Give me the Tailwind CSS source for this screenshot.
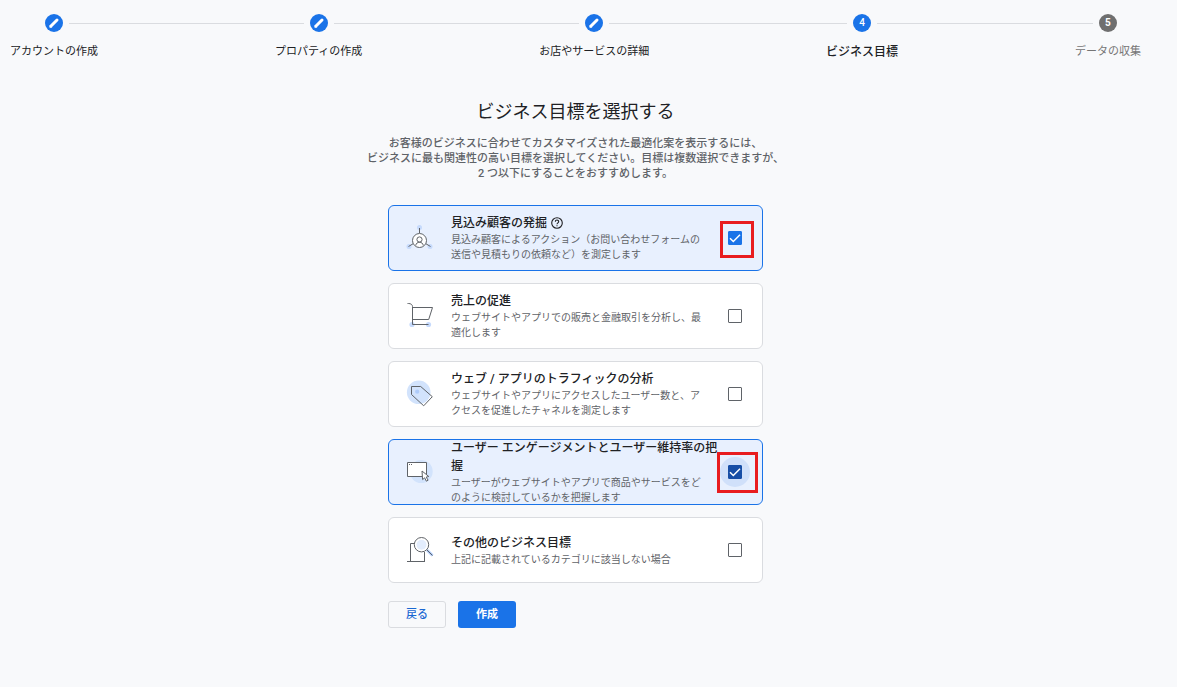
<!DOCTYPE html>
<html lang="ja">
  <head>
    <meta charset="UTF-8" />
    <meta name="viewport" content="width=device-width, initial-scale=1.0" />
    <title>ビジネス目標を選択する</title>
    <script src="https://cdn.jsdelivr.net/npm/@tailwindcss/browser@4"></script>
  </head>
  <body
    class="min-h-screen bg-[#f8f9fb] pr-[26px] text-[#202124] font-[Roboto,'Noto_Sans_CJK_JP',sans-serif]"
  >
    <!-- ステップ -->
    <nav class="px-[10px] pt-[14px]">
      <ol class="flex text-[11px] leading-4">
        <li class="flex shrink-0 flex-col items-center gap-3">
          <div class="flex w-full items-center gap-[6px]">
            <span class="flex-1"></span>
            <span class="flex size-[18px] items-center justify-center rounded-full bg-[#1a73e8]">
              <svg class="size-[14px]" viewBox="0 0 14 14" fill="none" stroke="#fff" stroke-linecap="round">
                <path d="M4 10 10 4" stroke-width="3" />
                <path d="M2.8 11.2v-1.6l1.6 1.6z" fill="#fff" stroke-width=".6" />
              </svg>
            </span>
            <span class="h-px flex-1 bg-[#dadce0]"></span>
          </div>
          <span>アカウントの作成</span>
        </li>
        <li class="mt-[9px] h-px flex-1 bg-[#dadce0]"></li>
        <li class="flex shrink-0 flex-col items-center gap-3">
          <div class="flex w-full items-center gap-[6px]">
            <span class="h-px flex-1 bg-[#dadce0]"></span>
            <span class="flex size-[18px] items-center justify-center rounded-full bg-[#1a73e8]">
              <svg class="size-[14px]" viewBox="0 0 14 14" fill="none" stroke="#fff" stroke-linecap="round">
                <path d="M4 10 10 4" stroke-width="3" />
                <path d="M2.8 11.2v-1.6l1.6 1.6z" fill="#fff" stroke-width=".6" />
              </svg>
            </span>
            <span class="h-px flex-1 bg-[#dadce0]"></span>
          </div>
          <span>プロパティの作成</span>
        </li>
        <li class="mt-[9px] h-px flex-1 bg-[#dadce0]"></li>
        <li class="flex shrink-0 flex-col items-center gap-3">
          <div class="flex w-full items-center gap-[6px]">
            <span class="h-px flex-1 bg-[#dadce0]"></span>
            <span class="flex size-[18px] items-center justify-center rounded-full bg-[#1a73e8]">
              <svg class="size-[14px]" viewBox="0 0 14 14" fill="none" stroke="#fff" stroke-linecap="round">
                <path d="M4 10 10 4" stroke-width="3" />
                <path d="M2.8 11.2v-1.6l1.6 1.6z" fill="#fff" stroke-width=".6" />
              </svg>
            </span>
            <span class="h-px flex-1 bg-[#dadce0]"></span>
          </div>
          <span>お店やサービスの詳細</span>
        </li>
        <li class="mt-[9px] h-px flex-1 bg-[#dadce0]"></li>
        <li class="flex shrink-0 flex-col items-center gap-3">
          <div class="flex w-full items-center gap-[6px]">
            <span class="h-px flex-1 bg-[#dadce0]"></span>
            <span class="flex size-[18px] items-center justify-center rounded-full bg-[#1a73e8] text-[10px] font-medium text-white">4</span>
            <span class="h-px flex-1 bg-[#dadce0]"></span>
          </div>
          <span class="text-xs font-medium">ビジネス目標</span>
        </li>
        <li class="mt-[9px] h-px flex-1 bg-[#dadce0]"></li>
        <li class="flex shrink-0 flex-col items-center gap-3">
          <div class="flex w-full items-center gap-[6px]">
            <span class="h-px flex-1 bg-[#dadce0]"></span>
            <span class="flex size-[18px] items-center justify-center rounded-full bg-[#6f6f6f] text-[10px] font-bold text-white">5</span>
            <span class="flex-1"></span>
          </div>
          <span class="text-[#757575]">データの収集</span>
        </li>
      </ol>
    </nav>

    <main class="flex flex-col items-center pt-10">
      <h1 class="text-lg leading-6">ビジネス目標を選択する</h1>
      <p class="mt-3 text-center text-[11px] leading-[15px] font-medium text-[#5f6368]">
        お客様のビジネスに合わせてカスタマイズされた最適化案を表示するには、<br />
        ビジネスに最も関連性の高い目標を選択してください。目標は複数選択できますが、<br />
        2 つ以下にすることをおすすめします。
      </p>

      <form class="mt-6 flex w-[375px] flex-col gap-3">
        <label for="leads" class="relative flex h-[66px] items-center rounded-md border border-[#1a73e8] bg-[#e8f0fe] pr-5 pl-[17px]">
          <svg class="mr-[17px] size-7 shrink-0" viewBox="0 0 28 28" fill="none" stroke="#5f6368">
            <g fill="#c6dafc" stroke="none">
              <circle cx="13.5" cy="3.5" r="2.5" />
              <circle cx="3" cy="22.5" r="2.5" />
              <circle cx="24" cy="22.5" r="2.5" />
            </g>
            <path d="M13.5 4v5M7.5 19.5l-5 3M19.5 19.5l5 3" />
            <circle cx="13.5" cy="16.5" r="7" fill="#fff" />
            <circle cx="13.5" cy="15.5" r="2.6" />
            <path d="M9.8 21.5c0-4.3 7.4-4.3 7.4 0" />
          </svg>
          <span class="flex-1">
            <span class="flex items-center gap-1 text-xs leading-[18px] font-medium">
              見込み顧客の発掘
              <svg class="size-3" viewBox="0 0 12 12" fill="none" stroke="#202124">
                <circle cx="6" cy="6" r="5.3" stroke-width="1.1" />
                <path d="M4.3 4.8c0-2.3 3.4-2.3 3.4-.1C7.7 5.9 6 5.9 6 7.3M6 8.2v1.1" stroke-width="1.1" />
              </svg>
            </span>
            <span class="block max-w-[255px] text-[10px] leading-[15px] text-[#5f6368]">見込み顧客によるアクション（お問い合わせフォームの送信や見積もりの依頼など）を測定します</span>
          </span>
          <span class="grid size-[14px] shrink-0 place-items-center">
            <input id="leads" type="checkbox" checked class="peer col-start-1 row-start-1 size-[14px] appearance-none rounded-[1px] border border-[#5f6368] bg-white checked:border-[#1a73e8] checked:bg-[#1a73e8]" />
            <svg class="invisible z-10 col-start-1 row-start-1 size-[14px] peer-checked:visible" viewBox="0 0 14 14" fill="none" stroke="#fff" stroke-width="1.5"><path d="m2 7.2 3.3 3.3L12 3.8" /></svg>
          </span>
          <span class="absolute top-[15px] right-2 h-[37px] w-[34px] border-3 border-[#e81c1f]"></span>
        </label>

        <label for="sales" class="relative flex h-[66px] items-center rounded-md border border-[#dadce0] bg-white pr-5 pl-[17px]">
          <svg class="mr-[17px] size-7 shrink-0" viewBox="0 0 28 28" fill="none" stroke="#5f6368">
            <circle cx="6" cy="22.5" r="2.6" fill="#c6dafc" stroke="none" />
            <circle cx="22.5" cy="22.5" r="2.6" fill="#c6dafc" stroke="none" />
            <path d="M1.5 1.5h1.2c2 0 3.8 1.2 3.8 3v18h16M6.5 5.5h20l-3.8 12H6.5" />
          </svg>
          <span class="flex-1">
            <span class="block text-xs leading-[18px] font-medium">売上の促進</span>
            <span class="block max-w-[255px] text-[10px] leading-[15px] text-[#5f6368]">ウェブサイトやアプリでの販売と金融取引を分析し、最適化します</span>
          </span>
          <span class="grid size-[14px] shrink-0 place-items-center">
            <input id="sales" type="checkbox" class="peer col-start-1 row-start-1 size-[14px] appearance-none rounded-[1px] border border-[#5f6368] bg-white checked:border-[#1a73e8] checked:bg-[#1a73e8]" />
            <svg class="invisible z-10 col-start-1 row-start-1 size-[14px] peer-checked:visible" viewBox="0 0 14 14" fill="none" stroke="#fff" stroke-width="1.5"><path d="m2 7.2 3.3 3.3L12 3.8" /></svg>
          </span>
        </label>

        <label for="traffic" class="relative flex h-[66px] items-center rounded-md border border-[#dadce0] bg-white pr-5 pl-[17px]">
          <svg class="mr-[17px] size-7 shrink-0" viewBox="0 0 28 28" fill="none" stroke="#5f6368">
            <circle cx="12.7" cy="12.3" r="11.8" fill="#d2e3fc" stroke="none" />
            <path d="M5.5 6.5h9.2l11.6 10.2-8.6 9.1L5.5 14.5z" />
            <circle cx="11.2" cy="11.7" r="2.1" fill="#aecbfa" stroke="none" />
          </svg>
          <span class="flex-1">
            <span class="block text-xs leading-[18px] font-medium">ウェブ / アプリのトラフィックの分析</span>
            <span class="block max-w-[255px] text-[10px] leading-[15px] text-[#5f6368]">ウェブサイトやアプリにアクセスしたユーザー数と、アクセスを促進したチャネルを測定します</span>
          </span>
          <span class="grid size-[14px] shrink-0 place-items-center">
            <input id="traffic" type="checkbox" class="peer col-start-1 row-start-1 size-[14px] appearance-none rounded-[1px] border border-[#5f6368] bg-white checked:border-[#1a73e8] checked:bg-[#1a73e8]" />
            <svg class="invisible z-10 col-start-1 row-start-1 size-[14px] peer-checked:visible" viewBox="0 0 14 14" fill="none" stroke="#fff" stroke-width="1.5"><path d="m2 7.2 3.3 3.3L12 3.8" /></svg>
          </span>
        </label>

        <label for="engagement" class="relative flex h-[66px] items-center rounded-md border border-[#1a73e8] bg-[#e8f0fe] pr-5 pl-[17px]">
          <svg class="mr-[17px] size-7 shrink-0" viewBox="0 0 28 28" fill="none" stroke="#5f6368">
            <circle cx="15.2" cy="13.5" r="11.5" fill="#d2e3fc" stroke="none" />
            <path d="M1.5 4.5h19v14h-19z" fill="#fff" />
            <path d="M3 6.5h1M5 6.5h1" />
            <path d="m16 13 .6 8.6 2-1.8 1.8 3.4 1.7-1-1.9-3.1 2.6-.6z" fill="#fff" />
          </svg>
          <span class="flex-1">
            <span class="block text-xs leading-[18px] font-medium">ユーザー エンゲージメントとユーザー維持率の把握</span>
            <span class="block max-w-[255px] text-[10px] leading-[15px] text-[#5f6368]">ユーザーがウェブサイトやアプリで商品やサービスをどのように検討しているかを把握します</span>
          </span>
          <span class="relative grid size-[14px] shrink-0 place-items-center">
            <span class="absolute -inset-2 rounded-full bg-[#d0e0fa]"></span>
            <input id="engagement" type="checkbox" checked class="peer z-10 col-start-1 row-start-1 size-[14px] appearance-none rounded-[1px] border border-[#5f6368] bg-white checked:border-[#174ea6] checked:bg-[#174ea6]" />
            <svg class="invisible z-10 col-start-1 row-start-1 size-[14px] peer-checked:visible" viewBox="0 0 14 14" fill="none" stroke="#fff" stroke-width="1.5"><path d="m2 7.2 3.3 3.3L12 3.8" /></svg>
          </span>
          <span class="absolute top-3 right-1 h-[41px] w-[41px] border-3 border-[#e81c1f]"></span>
        </label>

        <label for="other" class="relative flex h-[66px] items-center rounded-md border border-[#dadce0] bg-white pr-5 pl-[17px]">
          <svg class="mr-[17px] size-7 shrink-0" viewBox="0 0 28 28" fill="none" stroke="#5f6368">
            <path d="M8.5 7.5h-4v18M18.5 16v9.5M1 25.5h18" />
            <path d="m21 14 5.5 5.5" stroke="#aecbfa" stroke-width="2.6" />
            <path d="m20.5 13.5 6 6" />
            <circle cx="15.5" cy="8.7" r="7.2" fill="#fff" />
            <circle cx="15.5" cy="8.7" r="5" fill="#e3edfd" stroke="none" />
          </svg>
          <span class="flex-1">
            <span class="block text-xs leading-[18px] font-medium">その他のビジネス目標</span>
            <span class="block max-w-[255px] text-[10px] leading-[15px] text-[#5f6368]">上記に記載されているカテゴリに該当しない場合</span>
          </span>
          <span class="grid size-[14px] shrink-0 place-items-center">
            <input id="other" type="checkbox" class="peer col-start-1 row-start-1 size-[14px] appearance-none rounded-[1px] border border-[#5f6368] bg-white checked:border-[#1a73e8] checked:bg-[#1a73e8]" />
            <svg class="invisible z-10 col-start-1 row-start-1 size-[14px] peer-checked:visible" viewBox="0 0 14 14" fill="none" stroke="#fff" stroke-width="1.5"><path d="m2 7.2 3.3 3.3L12 3.8" /></svg>
          </span>
        </label>

        <div class="mt-[6px] flex gap-3 text-[11px] leading-4">
          <button type="button" class="h-[27px] rounded-[3px] border border-[#dadce0] px-[17px] font-medium text-[#1967d2]">戻る</button>
          <button type="submit" class="h-[27px] rounded-[3px] bg-[#1a73e8] px-[18px] font-bold text-white">作成</button>
        </div>
      </form>
    </main>
  </body>
</html>
